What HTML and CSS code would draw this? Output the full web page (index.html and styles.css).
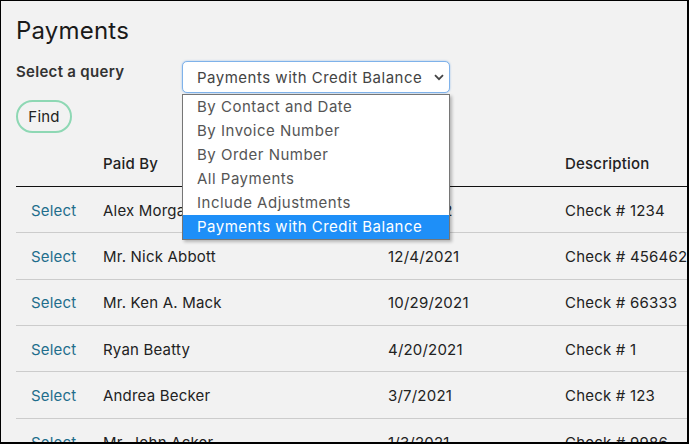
FILE: index.html
```html
<!DOCTYPE html>
<html lang="en">
  <head>
    <meta charset="UTF-8" />
    <meta name="viewport" content="width=device-width, initial-scale=1.0" />
    <title>Payments</title>
    <link rel="stylesheet" href="styles.css">
  </head>
  <body>
    <div class="frame">
      <div class="page">
        <h1 class="title">Payments</h1>

        <div class="query">
          <label class="query-label">Select a query</label>
          <div class="picker">
            <div class="picker-box">
              <span>Payments with Credit Balance</span>
              <svg class="chevron" width="10" height="7" viewBox="0 0 10 7">
                <path d="M1 1.2 L5 5.2 L9 1.2" fill="none" stroke="#444" stroke-width="1.8" />
              </svg>
            </div>
            <ul class="picker-list">
              <li>By Contact and Date</li>
              <li>By Invoice Number</li>
              <li>By Order Number</li>
              <li>All Payments</li>
              <li>Include Adjustments</li>
              <li class="active">Payments with Credit Balance</li>
            </ul>
          </div>
        </div>

        <button class="find">Find</button>

        <table class="payments">
          <thead>
            <tr>
              <th class="col-select"></th>
              <th class="col-name">Paid By</th>
              <th class="col-date">Date</th>
              <th class="col-desc">Description</th>
            </tr>
          </thead>
          <tbody>
            <tr>
              <td><a href="#">Select</a></td>
              <td>Alex Morgan</td>
              <td>1/5/2022</td>
              <td>Check # 1234</td>
            </tr>
            <tr>
              <td><a href="#">Select</a></td>
              <td>Mr. Nick Abbott</td>
              <td>12/4/2021</td>
              <td>Check # 456462</td>
            </tr>
            <tr>
              <td><a href="#">Select</a></td>
              <td>Mr. Ken A. Mack</td>
              <td>10/29/2021</td>
              <td>Check # 66333</td>
            </tr>
            <tr>
              <td><a href="#">Select</a></td>
              <td>Ryan Beatty</td>
              <td>4/20/2021</td>
              <td>Check # 1</td>
            </tr>
            <tr>
              <td><a href="#">Select</a></td>
              <td>Andrea Becker</td>
              <td>3/7/2021</td>
              <td>Check # 123</td>
            </tr>
            <tr>
              <td><a href="#">Select</a></td>
              <td>Mr. John Acker</td>
              <td>1/3/2021</td>
              <td>Check # 9986</td>
            </tr>
          </tbody>
        </table>
      </div>
    </div>
  </body>
</html>
```

FILE: styles.css
```css
body {
  margin: 0;
  font-family: Inter, "Noto Sans", sans-serif;
  color: #222;
}
.frame {
  width: 689px;
  height: 444px;
  box-sizing: border-box;
  border: 1px solid #000;
  border-right-width: 2px;
  border-bottom-width: 2px;
  background-color: #f2f2f2;
  overflow: hidden;
}
.page {
  padding: 15px 0 0 15px;
}
.title {
  margin: 0;
  font-size: 24px;
  font-weight: 400;
  line-height: 29px;
  letter-spacing: 0.2px;
  color: #1a1a1a;
}
.query {
  display: flex;
  align-items: flex-start;
  margin-top: 16px;
}
.query-label {
  width: 166px;
  padding-top: 1px;
  font-size: 15px;
  font-weight: 600;
  line-height: 20px;
  letter-spacing: 0.3px;
  color: #333;
}
.picker {
  position: relative;
  width: 268px;
}
.picker-box {
  display: flex;
  align-items: center;
  justify-content: space-between;
  height: 32px;
  box-sizing: border-box;
  padding: 0 5px 0 14px;
  background-color: #fff;
  border: 1px solid #7fb2ea;
  border-radius: 5px;
  box-shadow: 0 0 2px rgba(60, 140, 230, 0.5);
  font-size: 15px;
  letter-spacing: 0.5px;
  color: #444;
}
/* open option list drops over the table */
.picker-list {
  position: absolute;
  top: 33px;
  left: 0;
  right: 0;
  margin: 0;
  padding: 0;
  list-style: none;
  background-color: #fff;
  border: 1px solid #767676;
  box-shadow: 2px 2px 3px rgba(0, 0, 0, 0.25);
  z-index: 2;
}
.picker-list li {
  height: 24px;
  line-height: 24px;
  padding-left: 14px;
  font-size: 15px;
  letter-spacing: 0.5px;
  color: #555;
}
.picker-list li.active {
  background-color: #1e8ff8;
  color: #fff;
}
.find {
  margin-top: 7px;
  width: 56px;
  height: 33px;
  padding: 0;
  background-color: transparent;
  border: 2px solid #8ed8b4;
  border-radius: 17px;
  font-family: inherit;
  font-size: 15px;
  letter-spacing: 0.2px;
  color: #222;
  cursor: pointer;
}
.payments {
  margin-top: 7px;
  width: 760px;
  border-collapse: collapse;
  font-size: 15px;
  letter-spacing: 0.2px;
}
.payments th,
.payments td {
  height: 46.4px;
  padding: 1px 0 0 15px;
  text-align: left;
  box-sizing: border-box;
}
.payments th {
  font-weight: 500;
  border-bottom: 1px solid #111;
}
.payments td {
  border-bottom: 1px solid #ccc;
}
.col-select {
  width: 72px;
}
.col-name {
  width: 285px;
}
.col-date {
  width: 177px;
}
.payments a {
  color: #1f6e8c;
  text-decoration: none;
}
```
